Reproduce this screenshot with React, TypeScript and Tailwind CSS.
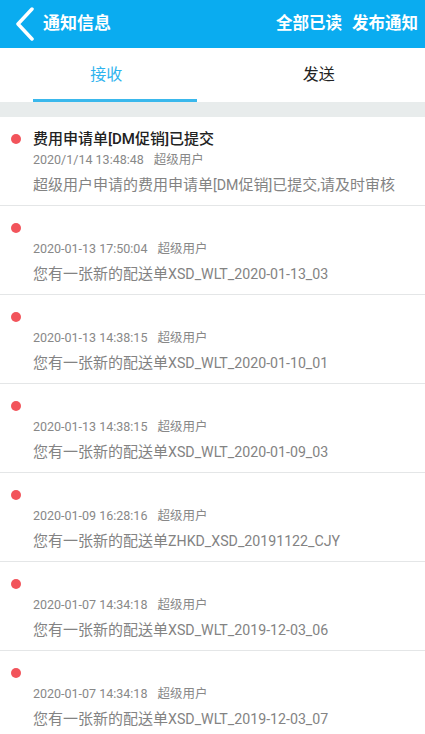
import { useState } from 'react'

type Notice = { title?: string, time: string, user: string, body: string }

const notices: Notice[] = [
  { title: '费用申请单[DM促销]已提交', time: '2020/1/14 13:48:48', user: '超级用户', body: '超级用户申请的费用申请单[DM促销]已提交,请及时审核' },
  { time: '2020-01-13 17:50:04', user: '超级用户', body: '您有一张新的配送单XSD_WLT_2020-01-13_03' },
  { time: '2020-01-13 14:38:15', user: '超级用户', body: '您有一张新的配送单XSD_WLT_2020-01-10_01' },
  { time: '2020-01-13 14:38:15', user: '超级用户', body: '您有一张新的配送单XSD_WLT_2020-01-09_03' },
  { time: '2020-01-09 16:28:16', user: '超级用户', body: '您有一张新的配送单ZHKD_XSD_20191122_CJY' },
  { time: '2020-01-07 14:34:18', user: '超级用户', body: '您有一张新的配送单XSD_WLT_2019-12-03_06' },
  { time: '2020-01-07 14:34:18', user: '超级用户', body: '您有一张新的配送单XSD_WLT_2019-12-03_07' }
]

// latin runs render a bit smaller than the CJK ones, like the device font
function Mixed ({ text }: { text: string }) {
  const parts = text.split(/([\u4e00-\u9fff]+)/).filter(Boolean)
  return (
    <>
      {parts.map((p, i) => /[\u4e00-\u9fff]/.test(p)
        ? <span key={i}>{p}</span>
        : <span key={i} className="text-[14.2px]">{p}</span>)}
    </>
  )
}

function NoticeItem ({ item }: { item: Notice }) {
  return (
    <div className="flex pl-[11px] pt-[11px] pb-[5px] border-b border-[#e4e6e7] bg-white">
      <div className="h-[22px] flex items-center shrink-0">
        <span className="block w-[10px] h-[10px] rounded-full bg-[#f2545b]" />
      </div>
      <div className="ml-[12px] flex-1 min-w-0">
        <div className="h-[22px] leading-[22px] text-[15px] font-medium text-[#222]">{item.title ?? ''}</div>
        <div className="h-[20px] leading-[20px] text-[12.5px] text-[#888]">
          {item.time}<span className="ml-[10px]">{item.user}</span>
        </div>
        <div className="h-[30px] leading-[30px] text-[15px] text-[#838383] whitespace-nowrap">
          <Mixed text={item.body} />
        </div>
      </div>
    </div>
  )
}

export default function App () {
  const [tab, setTab] = useState<'in' | 'out'>('in')

  return (
    <div className="w-[425px] h-[734px] overflow-hidden bg-white" style={{ fontFamily: 'Roboto, "Noto Sans CJK SC", sans-serif' }}>
      <div className="h-[48px] bg-[#0aacf0] flex items-center text-white">
        <svg width="20" height="34" viewBox="0 0 20 34" className="ml-[15px]">
          <polyline points="17,2 3,17 17,32" fill="none" stroke="white" strokeWidth="3.5" strokeLinecap="round" strokeLinejoin="round" />
        </svg>
        <div className="ml-[8px] text-[17px] font-bold">通知信息</div>
        <div className="ml-auto flex items-center gap-[10px] pr-[7px] text-[16.5px] font-bold">
          <span>全部已读</span>
          <span>发布通知</span>
        </div>
      </div>

      <div className="grid grid-cols-2 h-[54px] bg-white">
        <button onClick={() => setTab('in')} className="relative flex items-center justify-center">
          <span className={tab === 'in' ? 'text-[16px] text-[#2eb3ee]' : 'text-[16px] text-[#222]'}>接收</span>
          {tab === 'in' && <span className="absolute bottom-0 left-[33px] right-[16px] h-[3px] bg-[#3ab8ec]" />}
        </button>
        <button onClick={() => setTab('out')} className="relative flex items-center justify-center">
          <span className={tab === 'out' ? 'text-[16px] text-[#2eb3ee]' : 'text-[16px] text-[#222]'}>发送</span>
          {tab === 'out' && <span className="absolute bottom-0 left-[33px] right-[16px] h-[3px] bg-[#3ab8ec]" />}
        </button>
      </div>

      <div className="h-[15px] bg-[#e8ecec]" />

      <div>
        {notices.map((n, i) => <NoticeItem key={i} item={n} />)}
      </div>
    </div>
  )
}
